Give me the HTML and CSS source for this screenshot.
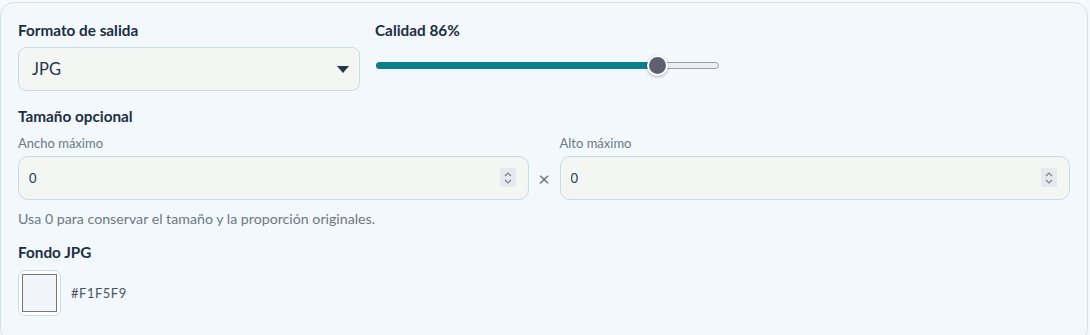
FILE: index.html
```html
<!DOCTYPE html>
<html lang="es">
<head>
    <meta charset="UTF-8">
    <title>Opciones de salida</title>
    <link rel="stylesheet" href="styles.css">
</head>
<body>
    <div class="card">
        <!-- Format and quality -->
        <div class="row-top">
            <div class="field">
                <label class="label" for="format">Formato de salida</label>
                <div class="select-wrap">
                    <select id="format" class="select">
                        <option>JPG</option>
                        <option>PNG</option>
                        <option>WEBP</option>
                    </select>
                    <svg class="select-arrow" width="12" height="7" viewBox="0 0 12 7"><path d="M0 0H12L6 7Z" fill="#22364a"/></svg>
                </div>
            </div>
            <div class="field">
                <div class="label">Calidad 86%</div>
                <div class="slider">
                    <div class="slider-track"></div>
                    <div class="slider-fill" style="width: 82%"></div>
                    <div class="slider-thumb" style="left: 82%"></div>
                </div>
            </div>
        </div>

        <!-- Optional size -->
        <div class="label section">Tamaño opcional</div>
        <div class="size-row">
            <div class="size-field">
                <div class="sublabel">Ancho máximo</div>
                <div class="num-wrap">
                    <input class="num" type="text" value="0">
                    <span class="spin">
                        <svg width="10" height="16" viewBox="0 0 10 16"><path d="M2 6L5 3L8 6M2 10L5 13L8 10" fill="none" stroke="#7d7f8c" stroke-width="1.2"/></svg>
                    </span>
                </div>
            </div>
            <span class="times">&times;</span>
            <div class="size-field">
                <div class="sublabel">Alto máximo</div>
                <div class="num-wrap">
                    <input class="num" type="text" value="0">
                    <span class="spin">
                        <svg width="10" height="16" viewBox="0 0 10 16"><path d="M2 6L5 3L8 6M2 10L5 13L8 10" fill="none" stroke="#7d7f8c" stroke-width="1.2"/></svg>
                    </span>
                </div>
            </div>
        </div>
        <p class="help">Usa 0 para conservar el tamaño y la proporción originales.</p>

        <!-- Background colour -->
        <div class="label">Fondo JPG</div>
        <div class="color-row">
            <div class="swatch"><div class="swatch-inner"></div></div>
            <span class="hex">#F1F5F9</span>
        </div>
    </div>
</body>
</html>
```

FILE: styles.css
```css
/* Page */
body {
    margin: 0;
    padding: 2px 2px 0 0;
    background: #f4f9fd;
    font-family: 'Lato', 'Liberation Sans', sans-serif;
    color: #1c2e42;
}

/* Main card */
.card {
    background: #f3f8fd;
    border: 1px solid #d4e2ec;
    border-radius: 14px;
    padding: 18px 17px 20px 17px;
    height: 340px;
    box-sizing: border-box;
}

.label {
    font-weight: bold;
    font-size: 15.3px;
    color: #1c2e42;
    display: block;
}

.section {
    margin-top: 16px;
}

/* First row: format + quality */
.row-top {
    display: grid;
    grid-template-columns: 342px 344px;
    gap: 15px;
}

.field .label {
    margin-bottom: 8px;
}

.select-wrap {
    position: relative;
}

.select {
    appearance: none;
    -webkit-appearance: none;
    width: 100%;
    height: 44px;
    border: 1px solid #c9dbe5;
    border-radius: 8px;
    background: #f4f6f4;
    padding: 0 13px;
    font-family: inherit;
    font-size: 16.5px;
    color: #22364a;
}

.select-arrow {
    position: absolute;
    right: 11px;
    top: 19px;
}

/* Slider */
.slider {
    position: relative;
    height: 22px;
    margin-top: 15px;
    margin-left: 1px;
}

.slider-track {
    position: absolute;
    left: 0;
    right: 0;
    top: 8px;
    height: 5px;
    background: #eceef3;
    border: 1px solid #9c9dab;
    border-radius: 4px;
}

.slider-fill {
    position: absolute;
    left: 0;
    top: 8px;
    height: 7px;
    background: #0d7f8c;
    border-radius: 4px;
}

.slider-thumb {
    position: absolute;
    top: 1px;
    width: 17px;
    height: 17px;
    margin-left: -10px;
    background: #5e5f6f;
    border: 2px solid #fff;
    border-radius: 50%;
    box-shadow: 0 1px 3px rgba(0, 0, 0, 0.3);
}

/* Size inputs */
.size-row {
    display: flex;
    align-items: flex-end;
    gap: 8px;
    margin-top: 10px;
}

.size-field {
    flex: 1;
}

.sublabel {
    font-size: 13px;
    color: #6c7984;
    margin-bottom: 5px;
}

.num-wrap {
    position: relative;
}

.num {
    width: 100%;
    height: 44px;
    box-sizing: border-box;
    border: 1px solid #c9dbe5;
    border-radius: 10px;
    background: #f4f6f4;
    padding: 0 10px;
    font-family: inherit;
    font-size: 13px;
    color: #22364a;
}

.spin {
    position: absolute;
    right: 13px;
    top: 12px;
    width: 16px;
    height: 19px;
    background: #e8e8ee;
    display: flex;
    align-items: center;
    justify-content: center;
}

.times {
    font-size: 20px;
    color: #6f7680;
    width: 15px;
    text-align: center;
    line-height: 44px;
}

.help {
    font-size: 14.2px;
    color: #6c7984;
    margin: 10px 0 16px 0;
}

/* Colour picker */
.color-row {
    display: flex;
    align-items: center;
    gap: 10px;
    margin-top: 9px;
}

.swatch {
    width: 43px;
    height: 46px;
    box-sizing: border-box;
    border: 1px solid #c9dbe5;
    border-radius: 7px;
    background: #fff;
    padding: 3px;
}

.swatch-inner {
    width: 100%;
    height: 100%;
    box-sizing: border-box;
    border: 1px solid #767676;
    background: #f1f5f9;
}

.hex {
    font-size: 13px;
    color: #4a5563;
    letter-spacing: 0.5px;
}
```
